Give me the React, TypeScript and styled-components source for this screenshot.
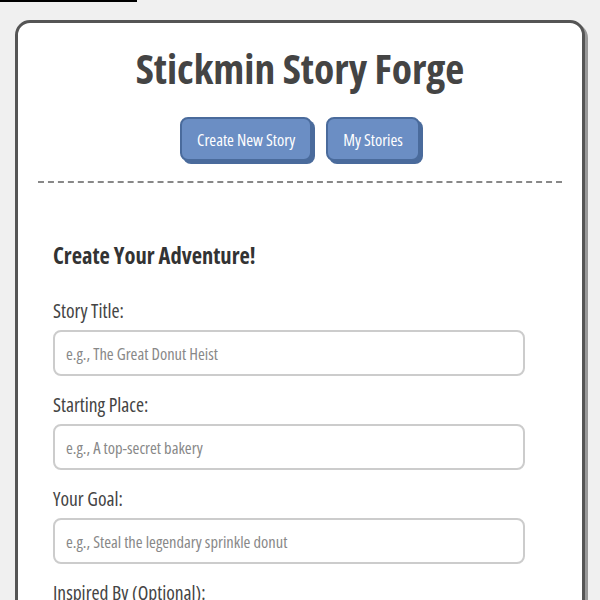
import styled, { createGlobalStyle } from "styled-components";

const GlobalStyle = createGlobalStyle`
    body {
        margin: 0;
        background: #f0f0f0;
        font-family: "Open Sans", "Liberation Sans", sans-serif;
        font-stretch: condensed;
        color: #444;
    }
`

const TopBar = styled.div`
    width: 137px;
    height: 2px;
    background: #000;
`

const Page = styled.div`
    margin: 18px 15px 0;
    background: #fff;
    border: 3px solid #555;
    border-radius: 15px;
    box-shadow: 3px 3px 0 #999;
    padding: 0 20px 40px;
`

const Header = styled.header`
    display: flex;
    flex-direction: column;
    align-items: center;
    padding: 17px 0 20px;
    border-bottom: 2px dashed #888;
`

const Title = styled.h1`
    margin: 0;
    font-size: 41.5px;
    font-weight: 700;
    color: #444;
`

const Nav = styled.nav`
    display: flex;
    gap: 14px;
    margin-top: 21px;
`

const NavButton = styled.button`
    font-family: inherit;
    font-stretch: inherit;
    font-size: 16.5px;
    color: #fff;
    background: #6b8ec4;
    border: 2px solid #4a6b9c;
    border-radius: 8px;
    box-shadow: 3px 3px 0 #4a6b9c;
    padding: 0 15px;
    height: 44px;
    cursor: pointer;
`

const Form = styled.form`
    display: flex;
    flex-direction: column;
    max-width: 472px;
    padding: 57px 15px 0;
`

const FormHeading = styled.h2`
    margin: 0 0 26px;
    font-size: 22.5px;
    font-weight: 700;
    color: #333;
`

const Field = styled.div`
    display: flex;
    flex-direction: column;
    margin-bottom: 15px;
`

const Label = styled.label`
    font-size: 19.5px;
    color: #444;
    margin-bottom: 6px;
`

const Input = styled.input`
    height: 46px;
    box-sizing: border-box;
    border: 2px solid #ccc;
    border-radius: 8px;
    padding: 0 11px;
    font-family: inherit;
    font-stretch: inherit;
    font-size: 16.5px;
    color: #444;
    &::placeholder {
        color: #888;
    }
`

const fields = [
    { label: "Story Title:", placeholder: "e.g., The Great Donut Heist" },
    { label: "Starting Place:", placeholder: "e.g., A top-secret bakery" },
    { label: "Your Goal:", placeholder: "e.g., Steal the legendary sprinkle donut" },
    { label: "Inspired By (Optional):", placeholder: "e.g., Henry Stickmin" },
]

function App() {
    return (
        <>
            <GlobalStyle />
            <TopBar />
            <Page>
                <Header>
                    <Title>Stickmin Story Forge</Title>
                    <Nav>
                        <NavButton>Create New Story</NavButton>
                        <NavButton>My Stories</NavButton>
                    </Nav>
                </Header>
                <Form onSubmit={(e) => e.preventDefault()}>
                    <FormHeading>Create Your Adventure!</FormHeading>
                    {fields.map((f) => (
                        <Field key={f.label}>
                            <Label>{f.label}</Label>
                            <Input placeholder={f.placeholder} />
                        </Field>
                    ))}
                </Form>
            </Page>
        </>
    )
}

export default App;
